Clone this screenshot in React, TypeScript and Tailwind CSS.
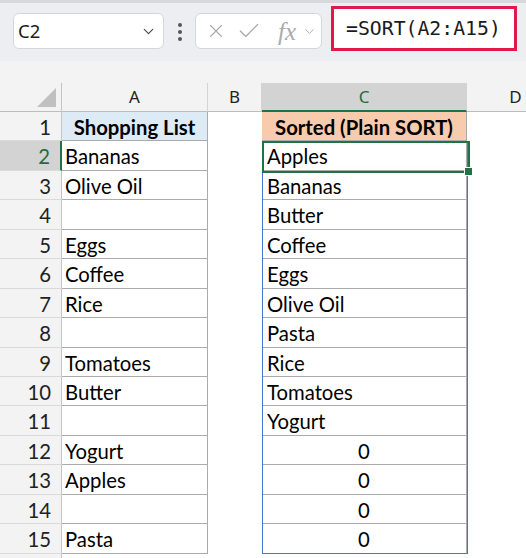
import { X, Check, ChevronDown } from 'lucide-react';

const colA = ['Shopping List', 'Bananas', 'Olive Oil', '', 'Eggs', 'Coffee', 'Rice', '', 'Tomatoes', 'Butter', '', 'Yogurt', 'Apples', '', 'Pasta'];
const colC = ['Sorted (Plain SORT)', 'Apples', 'Bananas', 'Butter', 'Coffee', 'Eggs', 'Olive Oil', 'Pasta', 'Rice', 'Tomatoes', 'Yogurt', '0', '0', '0', '0'];
const rows = Array.from({ length: 16 }, (_, i) => i + 1);

function Toolbar() {
  return (
    <div className="h-[61px] border-t-[3px] border-[#d6d8dc] bg-[#eceef1] flex items-start font-['Noto_Sans',sans-serif]">
      {/* Name box */}
      <div className="ml-[13px] mt-[10px] w-[151px] h-[36px] bg-white border border-[#d3d6da] rounded-[6px] flex items-center justify-between pl-[4px] pr-[6px]">
        <span className="text-[18.5px] text-[#1b1b1b] leading-none">C2</span>
        <ChevronDown size={17} strokeWidth={1.6} className="text-[#444]" />
      </div>
      {/* dots */}
      <div className="ml-[14px] mt-[20px] flex flex-col gap-[3px]">
        <span className="w-[4px] h-[4px] rounded-full bg-[#555]" />
        <span className="w-[4px] h-[4px] rounded-full bg-[#555]" />
        <span className="w-[4px] h-[4px] rounded-full bg-[#555]" />
      </div>
      {/* cancel / enter / fx */}
      <div className="ml-[13px] mt-[10px] w-[127px] h-[36px] bg-white border border-[#d3d6da] rounded-[6px] flex items-center pl-[9px] text-[#a9abae]">
        <X size={22} strokeWidth={1.2} />
        <Check size={26} strokeWidth={1.2} className="ml-[9px]" />
        <span className="ml-[16px] font-['Liberation_Serif',serif] italic text-[25px] leading-none">fx</span>
        <ChevronDown size={15} strokeWidth={1.5} className="ml-[6px]" />
      </div>
      {/* formula */}
      <div className="ml-[9px] mt-[3px] w-[186px] h-[45px] bg-white border-[3px] border-[#e0194a] flex items-center pl-[12px]">
        <span className="font-['DejaVu_Sans_Mono',monospace] text-[19.8px] text-[#1b1b1b] leading-none">=SORT(A2:A15)</span>
      </div>
    </div>
  );
}

function HeaderCell({ label, selected }: { label: string; selected?: boolean }) {
  return (
    <div
      className={`w-full h-[29px] flex items-center justify-center text-[17px] font-['Noto_Sans',sans-serif] border-r border-[#d4d4d4] ${
        selected ? 'bg-[#d3d3d3] text-[#1e6c41] border-b-[2px] border-b-[#217346]' : 'bg-[#f3f3f3] text-[#222] border-b border-b-[#bdbdbd]'
      }`}
    >
      {label}
    </div>
  );
}

export default function App() {
  return (
    <div className="w-[526px] h-[558px] overflow-hidden bg-white">
      <Toolbar />
      <div className="h-[22px] bg-[#f3f3f3]" />

      <div className="flex font-['Lato',sans-serif] text-[20.3px] text-black">
        {/* row headers */}
        <div className="w-[62px] shrink-0">
          <div className="h-[29px] bg-[#f3f3f3] border-r border-[#c4c4c4] border-b border-b-[#bdbdbd] flex items-end justify-end pr-[5px] pb-[4px]">
            <svg width="19" height="19" viewBox="0 0 19 19">
              <polygon points="19,0 19,19 0,19" fill="#c0c0c0" />
            </svg>
          </div>
          {rows.map((r) => (
            <div
              key={r}
              className={`h-[29.45px] flex items-center justify-end pr-[10px] pt-[2px] border-b border-[#dadada] ${
                r === 2
                  ? 'bg-[#d3d3d3] text-[#1e6c41] border-r-[2px] border-r-[#217346]'
                  : 'bg-[#f3f3f3] text-[#222] border-r border-r-[#c4c4c4]'
              }`}
            >
              {r < 16 ? r : ''}
            </div>
          ))}
        </div>

        {/* column A */}
        <div className="w-[146px] shrink-0">
          <HeaderCell label="A" />
          {colA.map((v, i) => (
            <div
              key={i}
              className={`h-[29.45px] flex items-center border-r border-b border-[#ababab] px-[3px] pt-[2px] whitespace-nowrap ${
                i === 0 ? 'bg-[#ddebf7] font-bold justify-center' : 'bg-white'
              }`}
            >
              {v}
            </div>
          ))}
        </div>

        {/* column B */}
        <div className="w-[54px] shrink-0">
          <HeaderCell label="B" />
        </div>

        {/* column C */}
        <div className="w-[205px] shrink-0 relative">
          <HeaderCell label="C" selected />
          {colC.map((v, i) => (
            <div
              key={i}
              className={`h-[29.45px] flex items-center border-r border-b border-[#ababab] px-[5px] pt-[2px] whitespace-nowrap ${
                i === 0 ? 'bg-[#f8cbad] font-bold justify-center' : v === '0' ? 'justify-center bg-white' : 'bg-white'
              }`}
            >
              {v}
            </div>
          ))}
          {/* spill range */}
          <div className="absolute left-0 right-[-1px] top-[58.4px] h-[413px] border-[1.5px] border-[#3f78d6] pointer-events-none" />
          {/* active cell */}
          <div className="absolute left-0 right-[-3px] top-[57.5px] h-[32px] border-[2.5px] border-[#217346] pointer-events-none" />
          <div className="absolute right-[-6px] top-[84px] w-[9px] h-[9px] bg-[#217346] border border-white pointer-events-none" />
        </div>

        {/* column D */}
        <div className="w-[98px] shrink-0">
          <HeaderCell label="D" />
        </div>
      </div>
    </div>
  );
}
